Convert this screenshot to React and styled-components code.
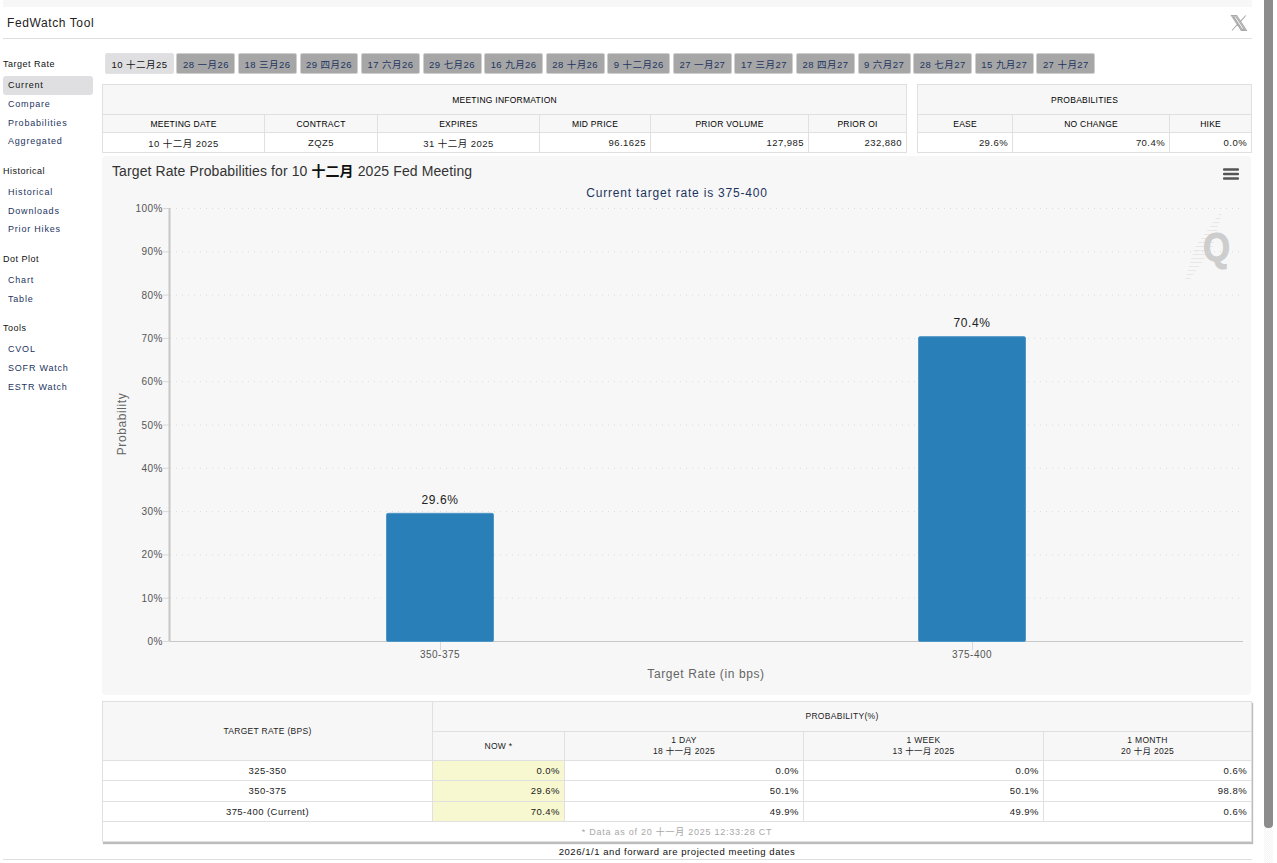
import styled, { createGlobalStyle } from 'styled-components';

const TABS = [
    "10 十二月25", "28 一月26", "18 三月26", "29 四月26", "17 六月26", "29 七月26", "16 九月26", "28 十月26",
    "9 十二月26", "27 一月27", "17 三月27", "28 四月27", "9 六月27", "28 七月27", "15 九月27", "27 十月27",
];

const NAV = [
    { title: "Target Rate", items: ["Current", "Compare", "Probabilities", "Aggregated"] },
    { title: "Historical", items: ["Historical", "Downloads", "Prior Hikes"] },
    { title: "Dot Plot", items: ["Chart", "Table"] },
    { title: "Tools", items: ["CVOL", "SOFR Watch", "ESTR Watch"] },
];

const RATES = [
    { rate: "325-350", now: "0.0%", day: "0.0%", week: "0.0%", month: "0.6%" },
    { rate: "350-375", now: "29.6%", day: "50.1%", week: "50.1%", month: "98.8%" },
    { rate: "375-400 (Current)", now: "70.4%", day: "49.9%", week: "49.9%", month: "0.6%" },
];

const TICKS = [0, 10, 20, 30, 40, 50, 60, 70, 80, 90, 100];

const BARS = [
    { label: "350-375", value: 29.6, center: 338 },
    { label: "375-400", value: 70.4, center: 870 },
];

// chart coordinates are relative to the panel (panel starts at 102,156)
const PLOT_LEFT = 68;
const PLOT_RIGHT = 1141;
const PLOT_BOTTOM = 485;
const PLOT_HEIGHT = 433;

// hatch lines behind the Q, wide in the middle and narrow at both ends
const HATCH = Array.from({ length: 17 }, (_, i) => {
    const y = 58 + i * 4;
    const center = 1118 - (y - 58) * 0.5;
    const half = (1 - Math.abs(y - 92) / 36) * 8 + 1;
    return { y, x1: center - half, x2: center + half };
});

function RateChart() {
    const y = (v) => PLOT_BOTTOM - (v / 100) * PLOT_HEIGHT;

    return (
        <ChartSvg width="1149" height="539" viewBox="0 0 1149 539">
            <text x="575" y="41" textAnchor="middle" fontSize="12" letterSpacing="0.8" fill="#1d3461">Current target rate is 375-400</text>

            {HATCH.map((h) => (
                <line key={h.y} x1={h.x1} x2={h.x2} y1={h.y + 0.5} y2={h.y + 0.5} stroke="#e7e7e7" />
            ))}
            <text transform="translate(1114.5 105) scale(0.85 1)" textAnchor="middle" fontSize="41" fontWeight="700" fill="#cdcdcd" stroke="#cdcdcd">Q</text>

            {TICKS.map((t) => (
                <g key={t}>
                    {t > 0 && <line x1={PLOT_LEFT} x2={PLOT_RIGHT} y1={y(t) + 0.5} y2={y(t) + 0.5} stroke="#dcdcdc" strokeWidth="1" strokeDasharray="1 5" />}
                    <line x1={PLOT_LEFT - 7} x2={PLOT_LEFT} y1={y(t) + 0.5} y2={y(t) + 0.5} stroke="#d8d8d8" />
                    <text x={PLOT_LEFT - 7} y={y(t) + 4} textAnchor="end" fontSize="10" letterSpacing="0.5" fill="#555">{t}%</text>
                </g>
            ))}

            <line x1={PLOT_LEFT - 0.5} x2={PLOT_LEFT - 0.5} y1={y(100)} y2={PLOT_BOTTOM} stroke="#c8c8c8" strokeWidth="2" />
            <line x1={PLOT_LEFT} x2={PLOT_RIGHT} y1={PLOT_BOTTOM + 0.5} y2={PLOT_BOTTOM + 0.5} stroke="#c8c8c8" />

            {BARS.map((bar) => (
                <g key={bar.label}>
                    <rect x={bar.center - 53.5} y={y(bar.value) + 0.5} width="107" height={PLOT_BOTTOM - y(bar.value)} rx="1.5" fill="#2980b9" stroke="#4f97c6" />
                    <line x1={bar.center + 0.5} x2={bar.center + 0.5} y1={PLOT_BOTTOM + 1} y2={PLOT_BOTTOM + 9} stroke="#d8d8d8" />
                    <text x={bar.center} y={y(bar.value) - 9} textAnchor="middle" fontSize="12" letterSpacing="0.6" fill="#222">{bar.value}%</text>
                    <text x={bar.center} y="502" textAnchor="middle" fontSize="10" letterSpacing="0.5" fill="#555">{bar.label}</text>
                </g>
            ))}

            <text x="604" y="522" textAnchor="middle" fontSize="12" letterSpacing="0.6" fill="#666">Target Rate (in bps)</text>
            <text transform="translate(24 268) rotate(-90)" textAnchor="middle" fontSize="12" letterSpacing="0.6" fill="#666">Probability</text>
        </ChartSvg>
    );
}

export default function App() {
    return (
        <Page>
            <GlobalStyle />
            <TopStrip />
            <Header>
                <h1>FedWatch Tool</h1>
                <XMark viewBox="0 0 24 24" aria-hidden="true">
                    <path d="M3 3h6.2l11.8 18h-6.2ZM20 3l-6.6 7.6M3.6 21l6.8-7.8M5.6 4.4h2.8l10 15.2h-2.8Z" fill="none" stroke="#aaa" strokeWidth="1.3" />
                </XMark>
            </Header>
            <Body>
                <Sidebar>
                    {NAV.map((group) => (
                        <NavGroup key={group.title}>
                            <NavTitle>{group.title}</NavTitle>
                            {group.items.map((item, i) => (
                                <NavItem key={item} $active={group.title === "Target Rate" && i === 0}>{item}</NavItem>
                            ))}
                        </NavGroup>
                    ))}
                </Sidebar>
                <Main>
                    <Tabs>
                        {TABS.map((tab, i) => <Tab key={tab} $active={i === 0}>{tab}</Tab>)}
                    </Tabs>
                    <InfoRow>
                        <InfoTable $width={805}>
                            <colgroup>
                                <Col $w={162} /><Col $w={113} /><Col $w={162} /><Col $w={111} /><Col $w={158} /><Col $w={98} />
                            </colgroup>
                            <thead>
                                <tr><TopHead colSpan="6">MEETING INFORMATION</TopHead></tr>
                                <tr>
                                    <SubHead>MEETING DATE</SubHead>
                                    <SubHead>CONTRACT</SubHead>
                                    <SubHead>EXPIRES</SubHead>
                                    <SubHead>MID PRICE</SubHead>
                                    <SubHead>PRIOR VOLUME</SubHead>
                                    <SubHead>PRIOR OI</SubHead>
                                </tr>
                            </thead>
                            <tbody>
                                <tr>
                                    <Cell>10 十二月 2025</Cell>
                                    <Cell>ZQZ5</Cell>
                                    <Cell>31 十二月 2025</Cell>
                                    <Cell $right>96.1625</Cell>
                                    <Cell $right>127,985</Cell>
                                    <Cell $right>232,880</Cell>
                                </tr>
                            </tbody>
                        </InfoTable>
                        <InfoTable $width={335}>
                            <colgroup>
                                <Col $w={95} /><Col $w={157} /><Col $w={82} />
                            </colgroup>
                            <thead>
                                <tr><TopHead colSpan="3">PROBABILITIES</TopHead></tr>
                                <tr>
                                    <SubHead>EASE</SubHead>
                                    <SubHead>NO CHANGE</SubHead>
                                    <SubHead>HIKE</SubHead>
                                </tr>
                            </thead>
                            <tbody>
                                <tr>
                                    <Cell $right>29.6%</Cell>
                                    <Cell $right>70.4%</Cell>
                                    <Cell $right>0.0%</Cell>
                                </tr>
                            </tbody>
                        </InfoTable>
                    </InfoRow>
                    <ChartPanel>
                        <ChartTitle>Target Rate Probabilities for 10 <b>十二月</b> 2025 Fed Meeting</ChartTitle>
                        <MenuIcon viewBox="0 0 16 14" aria-hidden="true">
                            <path d="M1 2.5h14M1 7h14M1 11.5h14" stroke="#555" strokeWidth="2.4" strokeLinecap="round" />
                        </MenuIcon>
                        <RateChart />
                    </ChartPanel>
                    <RatesTable>
                        <colgroup>
                            <Col $w={330} /><Col $w={132} /><Col $w={239} /><Col $w={240} /><Col $w={208} />
                        </colgroup>
                        <thead>
                            <tr>
                                <RateHead rowSpan="2">TARGET RATE (BPS)</RateHead>
                                <RateHead colSpan="4" $h={30}>PROBABILITY(%)</RateHead>
                            </tr>
                            <tr>
                                <RateHead $h={29}>NOW *</RateHead>
                                <RateHead>1 DAY<br />18 十一月 2025</RateHead>
                                <RateHead>1 WEEK<br />13 十一月 2025</RateHead>
                                <RateHead>1 MONTH<br />20 十月 2025</RateHead>
                            </tr>
                        </thead>
                        <tbody>
                            {RATES.map((row) => (
                                <tr key={row.rate}>
                                    <RateCell>{row.rate}</RateCell>
                                    <RateCell $right $now>{row.now}</RateCell>
                                    <RateCell $right>{row.day}</RateCell>
                                    <RateCell $right>{row.week}</RateCell>
                                    <RateCell $right>{row.month}</RateCell>
                                </tr>
                            ))}
                            <tr><NoteCell colSpan="5">* Data as of 20 十一月 2025 12:33:28 CT</NoteCell></tr>
                        </tbody>
                    </RatesTable>
                    <Footnote>2026/1/1 and forward are projected meeting dates</Footnote>
                </Main>
            </Body>
            <BottomRule />
            <ScrollTrack />
            <ScrollThumb />
        </Page>
    );
}

const GlobalStyle = createGlobalStyle`
    html, body {
        margin: 0;
        height: 100%;
        overflow: hidden;
        background: #fff;
    }
    * {
        box-sizing: border-box;
    }
    body, svg text {
        font-family: "Liberation Sans", "Noto Sans CJK SC", Arial, sans-serif;
    }
`
const Page = styled.div`
    position: relative;
    width: 1277px;
    height: 863px;
    padding: 0 25px 0 3px;
    overflow: hidden;
    color: #000;
`
const TopStrip = styled.div`
    height: 7px;
    background: #f7f7f7;
`
const Header = styled.header`
    height: 32px;
    display: flex;
    align-items: center;
    justify-content: space-between;
    border-bottom: 1px solid #dedede;
    padding: 0 3.5px 0 4px;

    h1 {
        margin: 1px 0 0;
        font-size: 12px;
        font-weight: 400;
        letter-spacing: 0.6px;
        color: #222;
    }
`
const XMark = styled.svg`
    width: 20px;
    height: 20px;
    margin-top: 1px;
`
const Body = styled.div`
    display: flex;
    gap: 9px;
`
const Sidebar = styled.nav`
    width: 90px;
    flex-shrink: 0;
    display: flex;
    flex-direction: column;
    padding-top: 18px;
    gap: 12.6px;
`
const NavGroup = styled.div`
    display: flex;
    flex-direction: column;
`
const NavTitle = styled.div`
    height: 16px;
    margin-bottom: 3px;
    line-height: 14px;
    font-size: 9px;
    letter-spacing: 0.5px;
    color: #111;
`
const NavItem = styled.a`
    height: 18.8px;
    line-height: 18px;
    padding-left: 5px;
    font-size: 9px;
    letter-spacing: 0.8px;
    border-radius: 3px;
    color: ${(p) => (p.$active ? "#111" : "#1d3461")};
    background: ${(p) => (p.$active ? "#dfdfe2" : "transparent")};
`
const Main = styled.main`
    width: 1150px;
    flex-shrink: 0;
`
const Tabs = styled.div`
    display: flex;
    gap: 2.6px;
    padding: 14px 0 0 3px;
`
const Tab = styled.button`
    height: 21px;
    padding: 0 5.5px;
    border: 1px solid ${(p) => (p.$active ? "#e2e2e5" : "#cfcfcf")};
    border-radius: 2px;
    font-family: inherit;
    font-size: 9.5px;
    letter-spacing: 0.45px;
    white-space: nowrap;
    color: ${(p) => (p.$active ? "#111" : "#1d3461")};
    background: ${(p) => (p.$active ? "#dfdfe2" : "#a6a6a6")};
`
const InfoRow = styled.div`
    display: flex;
    gap: 10px;
    margin-top: 10px;
`
const InfoTable = styled.table`
    width: ${(p) => p.$width}px;
    height: 69px;
    table-layout: fixed;
    border-collapse: collapse;
    border: 1px solid #e0e0e0;
    font-size: 8.5px;
`
const Col = styled.col`
    width: ${(p) => p.$w}px;
`
const TopHead = styled.th`
    height: 30px;
    font-weight: 400;
    letter-spacing: 0.25px;
    background: #f7f7f7;
    border: 1px solid #e0e0e0;
`
const SubHead = styled.th`
    height: 18px;
    font-weight: 400;
    letter-spacing: 0.25px;
    background: #f7f7f7;
    border: 1px solid #e0e0e0;
`
const Cell = styled.td`
    height: 19px;
    padding: 0 4px;
    font-size: 9.5px;
    letter-spacing: 0.45px;
    color: #222;
    text-align: ${(p) => (p.$right ? "right" : "center")};
    border: 1px solid #e0e0e0;
`
const ChartPanel = styled.section`
    position: relative;
    width: 1149px;
    height: 539px;
    margin-top: 3px;
    border-radius: 4px;
    background: #f7f7f7;
`
const ChartTitle = styled.h2`
    position: absolute;
    top: 7px;
    left: 10px;
    margin: 0;
    font-size: 14px;
    line-height: 17px;
    font-weight: 400;
    letter-spacing: 0.1px;
    color: #333;

    b {
        color: #111;
    }
`
const MenuIcon = styled.svg`
    position: absolute;
    top: 11px;
    right: 12px;
    width: 16px;
    height: 14px;
`
const ChartSvg = styled.svg`
    display: block;
`
const RatesTable = styled.table`
    width: 1150px;
    height: 141px;
    margin-top: 6px;
    table-layout: fixed;
    border-collapse: collapse;
    font-size: 8.5px;
    border: 1px solid #e0e0e0;
    box-shadow: 1px 2px 1px #bdbdbd;
`
const RateHead = styled.th`
    height: ${(p) => (p.$h ? `${p.$h}px` : "auto")};
    line-height: 11px;
    font-weight: 400;
    letter-spacing: 0.3px;
    color: #222;
    background: #f7f7f7;
    border: 1px solid #e0e0e0;
`
const RateCell = styled.td`
    height: 20.3px;
    padding: 0 4px;
    font-size: 9.5px;
    letter-spacing: 0.45px;
    color: #222;
    text-align: ${(p) => (p.$right ? "right" : "center")};
    background: ${(p) => (p.$now ? "#f7f8cf" : "#fff")};
    border: 1px solid #e0e0e0;
`
const NoteCell = styled.td`
    height: 20px;
    font-size: 9px;
    letter-spacing: 0.75px;
    text-align: center;
    color: #a8a8a8;
    border: 1px solid #e0e0e0;
`
const Footnote = styled.div`
    margin-top: 4px;
    line-height: 12px;
    text-align: center;
    font-size: 9.5px;
    letter-spacing: 0.55px;
    color: #111;
`
const BottomRule = styled.div`
    position: absolute;
    left: 3px;
    top: 859px;
    width: 1249px;
    border-top: 1px solid #dedede;
`
const ScrollTrack = styled.div`
    position: absolute;
    top: 828px;
    left: 1264px;
    width: 9px;
    height: 35px;
    background: repeating-conic-gradient(#f4f4f4 0 25%, #fff 0 50%) 0 0 / 2px 2px;
`
const ScrollThumb = styled.div`
    position: absolute;
    top: 0;
    left: 1264px;
    width: 9px;
    height: 828px;
    border-radius: 0 0 4px 4px;
    background: #8c8c8c;
`
